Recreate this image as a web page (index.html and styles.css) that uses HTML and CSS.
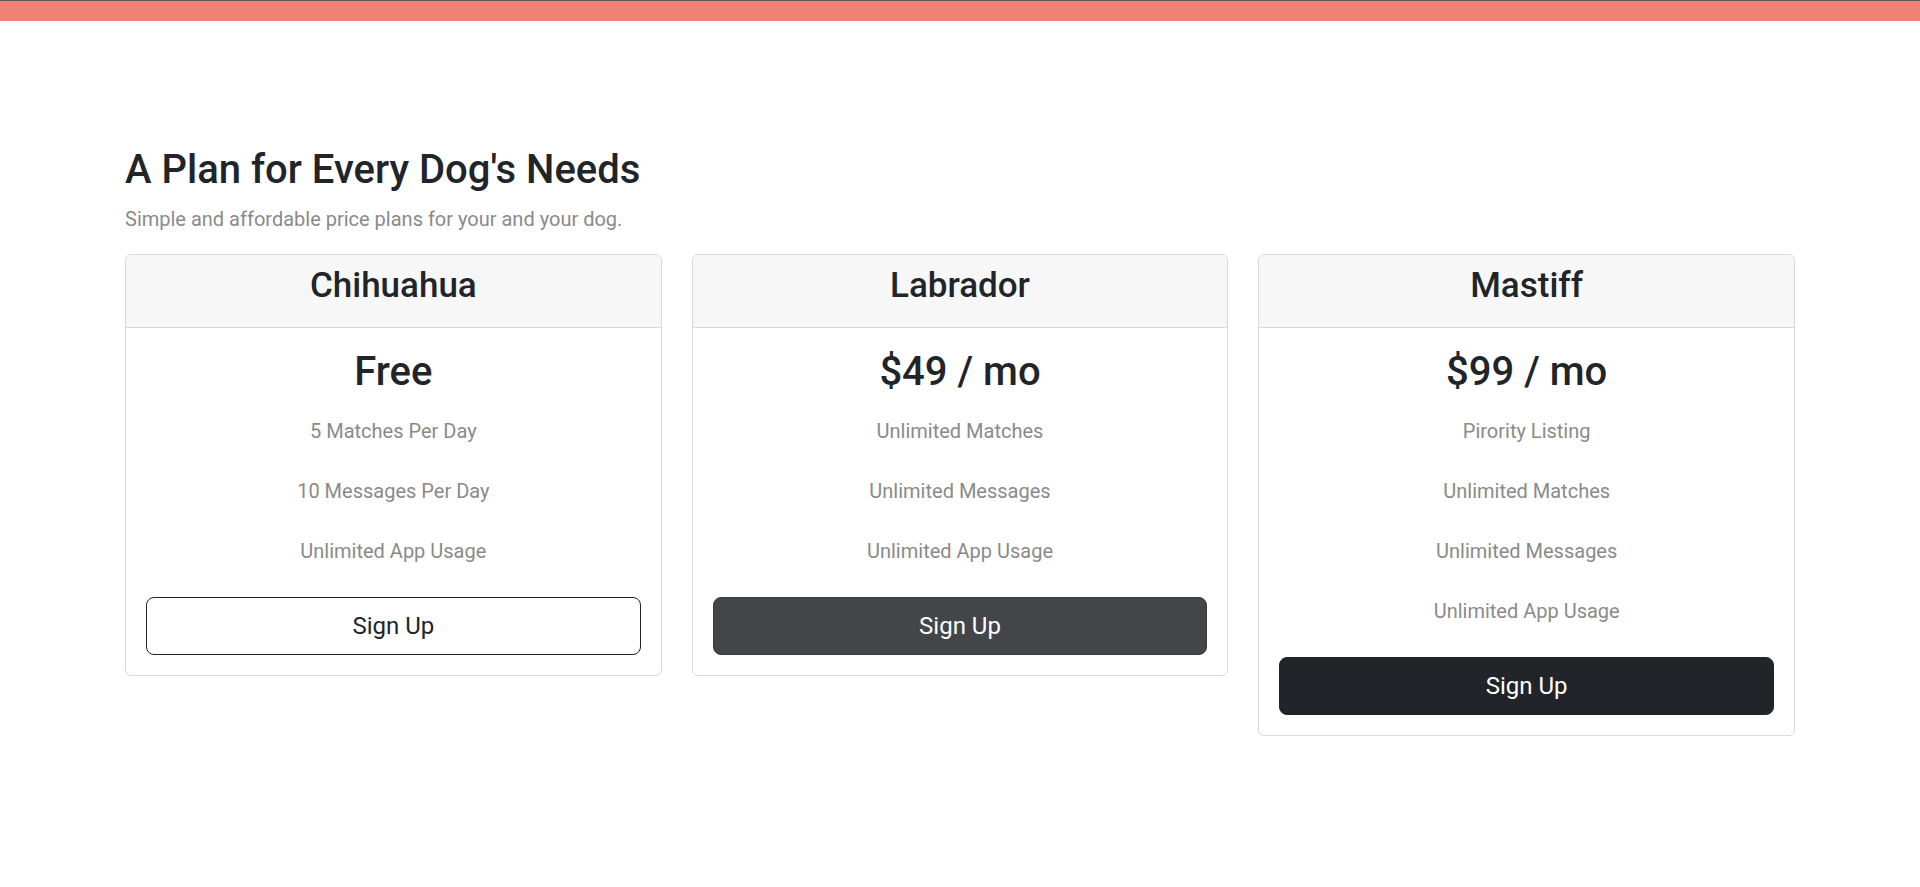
FILE: index.html
```html
<!DOCTYPE html>
<html lang="en">
<head>
<meta charset="utf-8">
<title>Pricing</title>
<link rel="stylesheet" href="styles.css">
</head>
<body>
<div class="topbar"></div>
<section class="pricing">
  <h2 class="pricing-title">A Plan for Every Dog's Needs</h2>
  <p class="pricing-sub">Simple and affordable price plans for your and your dog.</p>
  <div class="plans">
    <div class="card">
      <div class="card-header"><h3 class="plan-name">Chihuahua</h3></div>
      <div class="card-body">
        <h1 class="price">Free</h1>
        <ul class="features">
          <li>5 Matches Per Day</li>
          <li>10 Messages Per Day</li>
          <li>Unlimited App Usage</li>
        </ul>
        <button class="btn btn-outline">Sign Up</button>
      </div>
    </div>
    <div class="card">
      <div class="card-header"><h3 class="plan-name">Labrador</h3></div>
      <div class="card-body">
        <h1 class="price">$49 / mo</h1>
        <ul class="features">
          <li>Unlimited Matches</li>
          <li>Unlimited Messages</li>
          <li>Unlimited App Usage</li>
        </ul>
        <button class="btn btn-hover">Sign Up</button>
      </div>
    </div>
    <div class="card">
      <div class="card-header"><h3 class="plan-name">Mastiff</h3></div>
      <div class="card-body">
        <h1 class="price">$99 / mo</h1>
        <ul class="features">
          <li>Pirority Listing</li>
          <li>Unlimited Matches</li>
          <li>Unlimited Messages</li>
          <li>Unlimited App Usage</li>
        </ul>
        <button class="btn btn-dark">Sign Up</button>
      </div>
    </div>
  </div>
</section>
</body>
</html>
```
FILE: styles.css
```css
* { box-sizing: border-box; }
html, body { margin: 0; padding: 0; background: #fff; }
body {
  font-family: Roboto, "Liberation Sans", sans-serif;
  color: #212529;
}
.topbar {
  height: 21px;
  background: #ef8272;
  border-top: 1px solid #5a5a5a;
}
.pricing {
  padding: 125px 125px 0 125px;
}
.pricing-title {
  margin: 0;
  font-size: 40px;
  font-weight: 500;
  line-height: 48px;
}
.pricing-sub {
  margin: 10px 0 20px;
  font-size: 20px;
  line-height: 30px;
  color: #8a8a8a;
}
.plans {
  display: grid;
  grid-template-columns: repeat(3, 1fr);
  gap: 30px;
  align-items: start;
}
.card {
  border: 1px solid #d9d9d9;
  border-radius: 6px;
  overflow: hidden;
  background: #fff;
}
.card-header {
  background: #f7f7f7;
  border-bottom: 1px solid #d9d9d9;
  padding: 7px 20px 17px;
  text-align: center;
}
.plan-name {
  margin: 0;
  font-size: 35px;
  font-weight: 500;
  line-height: 48px;
}
.card-body {
  padding: 20px 20px 20px;
  text-align: center;
}
.price {
  margin: 0;
  font-size: 40px;
  font-weight: 500;
  line-height: 48px;
}
.features {
  list-style: none;
  margin: 5px 0 16px;
  padding: 0;
}
.features li {
  font-size: 20px;
  line-height: 30px;
  padding: 15px 0;
  color: #8a8a8a;
}
.btn {
  display: block;
  width: 100%;
  font-family: inherit;
  font-size: 24px;
  line-height: 36px;
  padding: 10px 16px;
  border-radius: 8px;
  border: 1px solid #212529;
  cursor: pointer;
}
.btn-outline {
  background: #fff;
  color: #212529;
}
.btn-hover {
  background: #424649;
  border-color: #373b3e;
  color: #fff;
}
.btn-dark {
  background: #212529;
  color: #fff;
}
```
